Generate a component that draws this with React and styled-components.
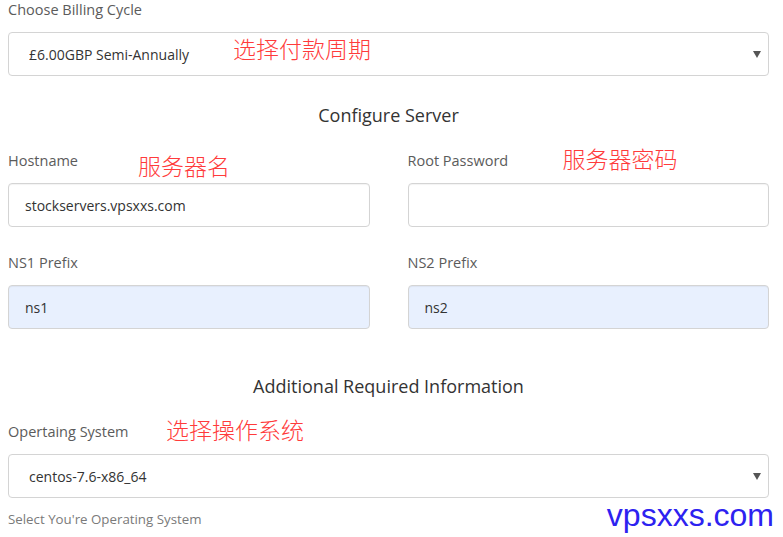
import React from "react";
import styled, { createGlobalStyle } from "styled-components";

const GlobalStyle = createGlobalStyle`
  html, body {
    margin: 0;
    padding: 0;
    background: #fff;
  }
  body {
    font-family: "Open Sans", "Noto Sans", sans-serif;
    color: #333;
  }
`;

function App() {
  return (
    <>
      <GlobalStyle />
      <Page>
        <Field>
          <Label>Choose Billing Cycle</Label>
          <SelectWrap>
            <Select defaultValue="semi">
              <option value="semi">£6.00GBP Semi-Annually</option>
            </Select>
            <Note $left={225} $top={1}>选择付款周期</Note>
          </SelectWrap>
        </Field>

        <Heading $top={27}>Configure Server</Heading>

        <Grid>
          <Field>
            <Label>Hostname</Label>
            <Input defaultValue="stockservers.vpsxxs.com" />
            <Note $left={130} $top={-1}>服务器名</Note>
          </Field>
          <Field>
            <Label>Root Password</Label>
            <Input type="password" />
            <Note $left={155} $top={-8}>服务器密码</Note>
          </Field>
          <Field>
            <Label>NS1 Prefix</Label>
            <Input defaultValue="ns1" $filled />
          </Field>
          <Field>
            <Label>NS2 Prefix</Label>
            <Input defaultValue="ns2" $filled />
          </Field>
        </Grid>

        <Heading $top={45}>Additional Required Information</Heading>

        <Field $top={24}>
          <Label>Opertaing System</Label>
          <SelectWrap>
            <Select defaultValue="centos">
              <option value="centos">centos-7.6-x86_64</option>
            </Select>
          </SelectWrap>
          <Note $left={158} $top={-8}>选择操作系统</Note>
          <Help>Select You're Operating System</Help>
        </Field>

        <Watermark>vpsxxs.com</Watermark>
      </Page>
    </>
  );
}

export default App;

const Page = styled.div`
  position: relative;
  width: 761px;
  height: 537px;
  padding: 0 14px 0 8px;
  overflow: hidden;
`;

const Field = styled.div`
  position: relative;
  display: flex;
  flex-direction: column;
  margin-top: ${(p) => p.$top || 0}px;
`;

const Label = styled.label`
  font-size: 14.5px;
  line-height: 20px;
  color: #5b5b5b;
  margin-bottom: 12px;
`;

const Heading = styled.h3`
  margin: ${(p) => p.$top}px 0 0;
  font-size: 18px;
  font-weight: 400;
  line-height: 24px;
  text-align: center;
  color: #333;
`;

const Grid = styled.div`
  display: grid;
  grid-template-columns: 1fr 1fr;
  column-gap: 38px;
  row-gap: 26px;
  margin-top: 24px;
`;

const Input = styled.input`
  box-sizing: border-box;
  width: 100%;
  height: 44px;
  padding: 0 16px;
  border: 1px solid #d4d4d4;
  border-radius: 4px;
  box-shadow: inset 0 1px 1px rgba(0, 0, 0, 0.05);
  background: ${(p) => (p.$filled ? "#e8f0fe" : "#fff")};
  font-family: "Open Sans", "Noto Sans", sans-serif;
  font-size: 14px;
  color: #333;
  outline: none;
`;

const SelectWrap = styled.div`
  position: relative;

  &::after {
    content: "";
    position: absolute;
    right: 8px;
    top: 50%;
    margin-top: -3px;
    border-left: 4px solid transparent;
    border-right: 4px solid transparent;
    border-top: 7px solid #555;
  }
`;

const Select = styled.select`
  box-sizing: border-box;
  width: 100%;
  height: 44px;
  padding: 0 30px 0 20px;
  border: 1px solid #d4d4d4;
  border-radius: 4px;
  background: #fff;
  appearance: none;
  -webkit-appearance: none;
  font-family: "Open Sans", "Noto Sans", sans-serif;
  font-size: 14px;
  color: #333;
  outline: none;
`;

const Help = styled.div`
  margin-top: 12px;
  font-size: 13.3px;
  line-height: 18px;
  color: #7a7a7a;
`;

const Note = styled.span`
  position: absolute;
  left: ${(p) => p.$left}px;
  top: ${(p) => p.$top}px;
  font-family: "Noto Sans CJK SC", "Noto Sans", sans-serif;
  font-weight: 300;
  font-size: 23px;
  line-height: 30px;
  color: #ff3b3b;
  white-space: nowrap;
  pointer-events: none;
`;

const Watermark = styled.div`
  position: absolute;
  right: 9px;
  bottom: 4px;
  font-family: "Liberation Sans", Arial, sans-serif;
  font-size: 32px;
  line-height: 36px;
  color: #2d22f0;
`;
